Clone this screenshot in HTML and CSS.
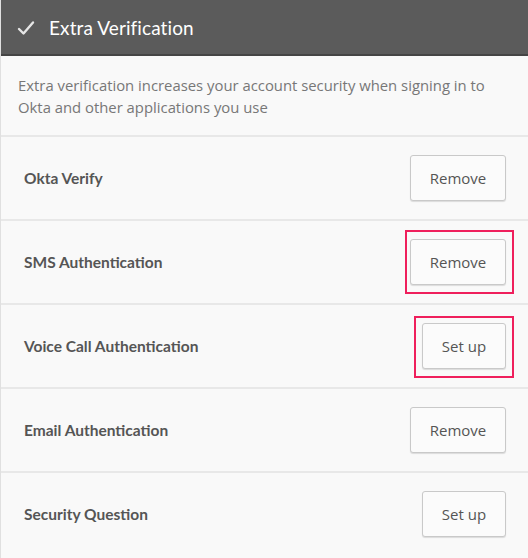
FILE: index.html
```html
<!DOCTYPE html>
<html>
<head>
<meta charset="utf-8">
<link rel="stylesheet" href="styles.css">
</head>
<body>
<div class="panel">
  <div class="header">
    <svg class="check" width="18" height="16" viewBox="0 0 18 16"><path d="M2 9 L6.5 13.5 L16 2.5" fill="none" stroke="#e6e6e6" stroke-width="2.4" stroke-linecap="round" stroke-linejoin="round"/></svg>
    <span class="title">Extra Verification</span>
  </div>
  <div class="desc">Extra verification increases your account security when signing in to Okta and other applications you use</div>
  <div class="row">
    <span class="label">Okta Verify</span>
    <span class="btn-wrap"><button class="btn">Remove</button></span>
  </div>
  <div class="row">
    <span class="label">SMS Authentication</span>
    <span class="btn-wrap"><button class="btn">Remove</button><span class="hl hl-sms"></span></span>
  </div>
  <div class="row">
    <span class="label">Voice Call Authentication</span>
    <span class="btn-wrap"><button class="btn setup">Set up</button><span class="hl hl-voice"></span></span>
  </div>
  <div class="row">
    <span class="label">Email Authentication</span>
    <span class="btn-wrap"><button class="btn">Remove</button></span>
  </div>
  <div class="row last">
    <span class="label">Security Question</span>
    <span class="btn-wrap"><button class="btn setup">Set up</button></span>
  </div>
</div>
</body>
</html>
```
FILE: styles.css
```css
html, body {
  margin: 0;
  padding: 0;
  background: #f9f9f9;
}
body {
  font-family: Lato, "Open Sans", sans-serif;
  color: #5c5c5c;
}
.panel {
  width: 528px;
  height: 558px;
  overflow: hidden;
  background: #f9f9f9;
  border-left: 1px solid #e0e0e0;
  box-sizing: border-box;
}
.header {
  height: 54px;
  background: #5b5b5b;
  border-bottom: 2px solid #454545;
  display: flex;
  align-items: center;
  padding-left: 17px;
  margin-left: -1px;
}
.check {
  margin-right: 14px;
  margin-top: 1px;
}
.title {
  color: #ffffff;
  font-size: 19px;
  letter-spacing: 0.1px;
}
.desc {
  padding: 18px 20px 17px 17px;
  font-family: "Open Sans", sans-serif;
  font-size: 14.85px;
  line-height: 22px;
  color: #777777;
  border-bottom: 2px solid #e8e8e8;
  height: 44px;
}
.row {
  height: 82px;
  display: flex;
  align-items: center;
  justify-content: space-between;
  padding: 0 22px 0 23px;
  border-bottom: 2px solid #e8e8e8;
}
.row.last {
  border-bottom: none;
}
.label {
  font-weight: bold;
  font-size: 15.5px;
  color: #555555;
}
.btn-wrap {
  position: relative;
  display: flex;
}
.btn {
  font-family: "Open Sans", sans-serif;
  font-size: 15px;
  color: #555555;
  background: #fbfbfb;
  border: 1px solid #c9c9c9;
  border-radius: 3px;
  box-shadow: 0 1px 1px rgba(0,0,0,0.12);
  width: 96px;
  height: 46px;
  padding: 0;
}
.btn.setup {
  width: 84px;
}
.hl {
  position: absolute;
  border: 2px solid #ef1f5c;
}
.hl-sms {
  left: -5px;
  right: -8px;
  top: -9px;
  bottom: -9px;
}
.hl-voice {
  left: -8px;
  right: -8px;
  top: -7px;
  bottom: -9px;
}
```
